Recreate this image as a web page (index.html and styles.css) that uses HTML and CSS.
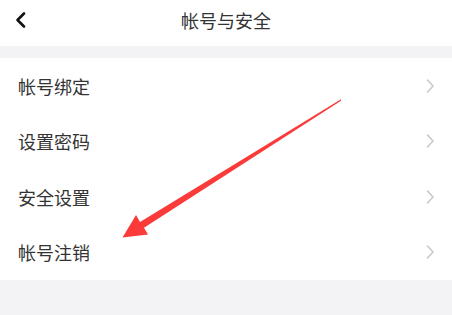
FILE: index.html
```html
<!DOCTYPE html>
<html lang="zh">
<head>
<meta charset="utf-8">
<link rel="stylesheet" href="styles.css">
</head>
<body>
<div class="page">
  <header class="topbar">
    <svg class="back" width="14" height="18" viewBox="0 0 14 18"><path d="M10 2.5 L3.5 9 L10 15.5" fill="none" stroke="#111" stroke-width="2.6" stroke-linecap="round" stroke-linejoin="round"/></svg>
    <h1 class="title">帐号与安全</h1>
  </header>
  <div class="gap"></div>
  <ul class="list">
    <li class="row"><span>帐号绑定</span><svg class="chev" width="10" height="16" viewBox="0 0 10 16"><path d="M2.5 2 L8 8 L2.5 14" fill="none" stroke="#c8c8c8" stroke-width="1.6" stroke-linecap="round" stroke-linejoin="round"/></svg></li>
    <li class="row"><span>设置密码</span><svg class="chev" width="10" height="16" viewBox="0 0 10 16"><path d="M2.5 2 L8 8 L2.5 14" fill="none" stroke="#c8c8c8" stroke-width="1.6" stroke-linecap="round" stroke-linejoin="round"/></svg></li>
    <li class="row"><span>安全设置</span><svg class="chev" width="10" height="16" viewBox="0 0 10 16"><path d="M2.5 2 L8 8 L2.5 14" fill="none" stroke="#c8c8c8" stroke-width="1.6" stroke-linecap="round" stroke-linejoin="round"/></svg></li>
    <li class="row"><span>帐号注销</span><svg class="chev" width="10" height="16" viewBox="0 0 10 16"><path d="M2.5 2 L8 8 L2.5 14" fill="none" stroke="#c8c8c8" stroke-width="1.6" stroke-linecap="round" stroke-linejoin="round"/></svg></li>
  </ul>
  <svg class="arrow" width="452" height="315" viewBox="0 0 452 315"><polygon points="341,99.3 140,222 136,215 122.5,237.5 148,234.5 144,227.8 341,100.7" fill="#fb3a3a"/></svg>
</div>
</body>
</html>
```
FILE: styles.css
```css
html, body { margin: 0; padding: 0; }
body {
  width: 452px;
  height: 315px;
  background: #f3f3f5;
  font-family: "Noto Sans CJK SC", "Noto Sans", sans-serif;
  color: #333;
  overflow: hidden;
}
.page { position: relative; width: 452px; height: 315px; }
.topbar {
  height: 46px;
  background: #fff;
  display: flex;
  align-items: center;
  justify-content: center;
  position: relative;
}
.back { position: absolute; left: 14px; top: 11px; }
.title {
  margin: 0;
  font-size: 18px;
  font-weight: 400;
  color: #333;
  margin-top: -6px;
}
.gap { height: 12px; background: #f3f3f5; }
.list { list-style: none; margin: 0; padding: 0; background: #fff; }
.row {
  height: 55.5px;
  display: flex;
  align-items: center;
  justify-content: space-between;
  padding: 0 17px 0 18px;
  font-size: 18px;
  color: #333;
}
.arrow { position: absolute; left: 0; top: 0; }
```
